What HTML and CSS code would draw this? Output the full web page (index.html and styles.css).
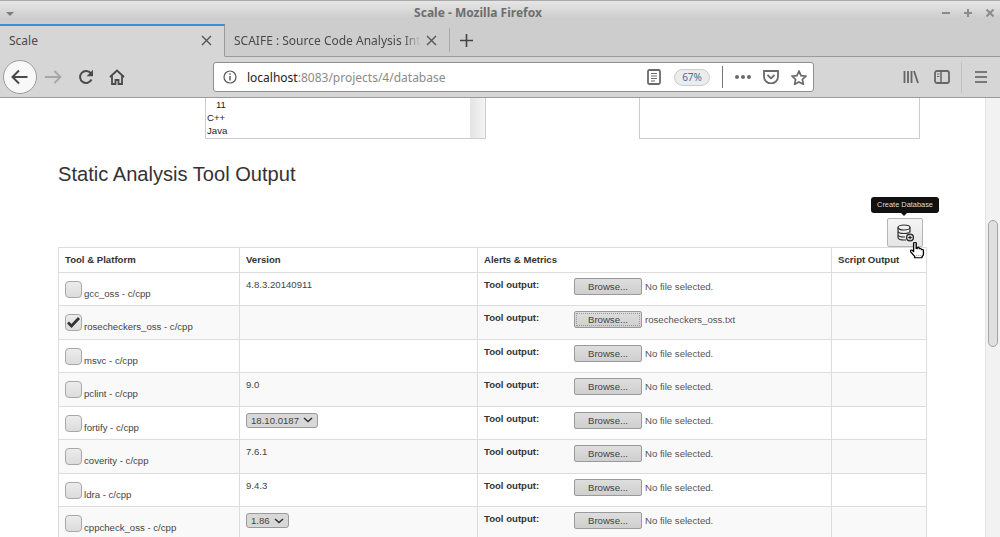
FILE: index.html
```html
<!DOCTYPE html>
<html>
	<head>
		<meta charset="UTF-8">
		<title>Scale</title>
		<link rel="stylesheet" href="styles.css">
	</head>
	<body>
		<div class="titlebar">
			<span class="menu-arrow"></span>
			<span class="title">Scale - Mozilla Firefox</span>
			<div class="win-btns">
				<svg width="8" height="8" viewBox="0 0 8 8"><path d="M0 4h8" stroke="#8a8a8a" stroke-width="2"/></svg>
				<svg width="8" height="8" viewBox="0 0 8 8"><path d="M0 4h8M4 0v8" stroke="#8a8a8a" stroke-width="2"/></svg>
				<svg width="8" height="8" viewBox="0 0 8 8"><path d="M.5.5l7 7M7.500.5l-7 7" stroke="#8a8a8a" stroke-width="2"/></svg>
			</div>
		</div>
		<div class="tabbar">
			<div class="tab active">
				<span class="tab-label">Scale</span>
				<svg width="11" height="11" viewBox="0 0 11 11"><path d="M1 1l9 9M10 1l-9 9" stroke="#555" stroke-width="1.4"/></svg>
			</div>
			<div class="tab second">
				<span class="tab-label fade">SCAIFE : Source Code Analysis Int</span>
				<svg width="11" height="11" viewBox="0 0 11 11"><path d="M1 1l9 9M10 1l-9 9" stroke="#555" stroke-width="1.4"/></svg>
			</div>
			<div class="tab-sep"></div>
			<svg class="new-tab" width="15" height="15" viewBox="0 0 15 15"><path d="M7.500 1v13M1 7.500h13" stroke="#444" stroke-width="1.600"/></svg>
		</div>
		<div class="toolbar">
			<div class="back">
				<svg width="18" height="16" viewBox="0 0 18 16"><path d="M1.500 8h15M8 1.500L1.500 8 8 14.500" fill="none" stroke="#4a4a4a" stroke-width="2"/></svg>
			</div>
			<svg class="forward" width="17" height="14" viewBox="0 0 17 14"><path d="M0 7h15M9.500 1l6 6-6 6" fill="none" stroke="#a6a6a6" stroke-width="1.800"/></svg>
			<svg class="reload" width="16" height="16" viewBox="0 0 16 16"><path d="M13.500 10.500A6 6 0 1 1 12.800 4.200" fill="none" stroke="#4a4a4a" stroke-width="2"/><path d="M15 0.800v6.400H8.600z" fill="#4a4a4a"/></svg>
			<svg class="home" width="16" height="16" viewBox="0 0 16 16"><path d="M1 8l7-6.500L15 8M3 7v8h3.500v-4h3v4H13V7" fill="none" stroke="#4a4a4a" stroke-width="1.800"/></svg>
			<div class="urlbar">
				<svg class="info" width="14" height="14" viewBox="0 0 14 14"><circle cx="7" cy="7" r="6" fill="none" stroke="#555" stroke-width="1.200"/><path d="M7 6v4.500M7 3.300v1.400" stroke="#555" stroke-width="1.400"/></svg>
				<span class="url"><b>localhost</b>:8083/projects/4/database</span>
				<svg class="reader" width="14" height="16" viewBox="0 0 14 16"><rect x="1" y="1" width="12" height="14" rx="1.500" fill="none" stroke="#6a6a6a" stroke-width="1.800"/><path d="M4 4.500h6M4 7h6M4 9.500h6M4 12h4" stroke="#6a6a6a"/></svg>
				<span class="zoom">67%</span>
				<span class="url-sep"></span>
				<span class="dots"><i></i><i></i><i></i></span>
				<svg class="pocket" width="16" height="14" viewBox="0 0 16 14"><path d="M1 1h14v5.500a7 7 0 0 1-14 0z" fill="none" stroke="#6a6a6a" stroke-width="1.800"/><path d="M4.500 5L8 8.300 11.500 5" fill="none" stroke="#6a6a6a" stroke-width="1.800"/></svg>
				<svg class="star" width="16" height="15" viewBox="0 0 16 15"><path d="M8 1.200l2.100 4.400 4.800.6-3.500 3.300.9 4.700L8 11.900l-4.300 2.300.9-4.700L1.100 6.200l4.800-.6z" fill="none" stroke="#6a6a6a" stroke-width="1.700"/></svg>
			</div>
			<svg class="library" width="16" height="14" viewBox="0 0 16 14"><path d="M1.500 1v12M5 1v12M8.500 1v12M11 1l4 12" stroke="#666" stroke-width="1.800" fill="none"/></svg>
			<svg class="sidebar" width="16" height="14" viewBox="0 0 16 14"><rect x="1" y="1" width="14" height="12" rx="2" fill="none" stroke="#666" stroke-width="1.800"/><path d="M7 1v12" stroke="#666" stroke-width="1.500"/><path d="M3 4h2.500M3 6.500h2.500" stroke="#666"/></svg>
			<div class="tool-sep"></div>
			<svg class="hamburger" width="12" height="12" viewBox="0 0 12 12"><path d="M0 1h12M0 6h12M0 11h12" stroke="#5a5a5a" stroke-width="1.600"/></svg>
		</div>
		<div class="viewport">
			<div class="page">
				<div class="pickers">
					<div class="picker">
						<div class="picker-list">
							<div class="indent">11</div>
							<div>C++</div>
							<div>Java</div>
						</div>
						<div class="picker-scroll"></div>
					</div>
					<div class="picker"></div>
				</div>
				<h2>Static Analysis Tool Output</h2>
				<div class="actions">
					<button class="db-btn">
						<svg width="17" height="18" viewBox="0 0 17 18">
							<ellipse cx="7" cy="3.500" rx="6" ry="2.500" fill="none" stroke="#333" stroke-width="1.200"/>
							<path d="M1 3.500v10c0 1.400 2.700 2.500 6 2.500h2M13 3.500v5M1 7c0 1.400 2.700 2.500 6 2.500s6-1.100 6-2.500M1 10.500c0 1.400 2.700 2.500 6 2.500h1" fill="none" stroke="#333" stroke-width="1.200"/>
							<circle cx="13" cy="13.500" r="3.400" fill="#ddd" stroke="#222" stroke-width="1.300"/>
							<path d="M13 11.800v3.400M11.300 13.500h3.400" stroke="#222" stroke-width="1.200"/>
						</svg>
					</button>
					<div class="tooltip">Create Database</div>
					<svg class="cursor" width="16" height="17" viewBox="1 1 15.500 19.500" preserveAspectRatio="none"><path d="M5 1.500c1-.8 2 0 2 1v6l1 .1V7.500c.8-.8 1.800-.5 2 .5v.8c.8-.7 1.800-.4 2 .5v.6c.8-.6 2-.2 2 .9v4.200c0 1.500-.8 2.200-1.500 3v1H5.500v-1.500L1.500 12c-.8-1.300.5-2.300 1.700-1.500L4.500 12V2.500z" fill="#fff" stroke="#000" stroke-width="1.300" stroke-linejoin="round"/><path d="M7 16.500h6" stroke="#999" stroke-dasharray="1 1"/></svg>
				</div>
				<table>
					<tr class="head">
						<th class="c1">Tool &amp; Platform</th>
						<th class="c2">Version</th>
						<th class="c3">Alerts &amp; Metrics</th>
						<th class="c4">Script Output</th>
					</tr>
					<tr>
						<td><label><span class="check"></span><span class="name">gcc_oss - c/cpp</span></label></td>
						<td class="ver">4.8.3.20140911</td>
						<td><div class="output"><b>Tool output:</b><span class="browse">Browse...</span><span class="file">No file selected.</span></div></td>
						<td></td>
					</tr>
					<tr class="odd">
						<td><label><span class="check checked"><svg width="15" height="15" viewBox="0 0 15 15"><path d="M2 7.500l3.500 3.500 7.500-8" fill="none" stroke="#333" stroke-width="2.800"/></svg></span><span class="name">rosecheckers_oss - c/cpp</span></label></td>
						<td class="ver"></td>
						<td><div class="output"><b>Tool output:</b><span class="browse focus"><span>Browse...</span></span><span class="file">rosecheckers_oss.txt</span></div></td>
						<td></td>
					</tr>
					<tr>
						<td><label><span class="check"></span><span class="name">msvc - c/cpp</span></label></td>
						<td class="ver"></td>
						<td><div class="output"><b>Tool output:</b><span class="browse">Browse...</span><span class="file">No file selected.</span></div></td>
						<td></td>
					</tr>
					<tr class="odd">
						<td><label><span class="check"></span><span class="name">pclint - c/cpp</span></label></td>
						<td class="ver">9.0</td>
						<td><div class="output"><b>Tool output:</b><span class="browse">Browse...</span><span class="file">No file selected.</span></div></td>
						<td></td>
					</tr>
					<tr>
						<td><label><span class="check"></span><span class="name">fortify - c/cpp</span></label></td>
						<td><span class="select">18.10.0187<svg width="10" height="6" viewBox="0 0 10 6"><path d="M1 1l4 3.500L9 1" fill="none" stroke="#333" stroke-width="1.600"/></svg></span></td>
						<td><div class="output"><b>Tool output:</b><span class="browse">Browse...</span><span class="file">No file selected.</span></div></td>
						<td></td>
					</tr>
					<tr class="odd">
						<td><label><span class="check"></span><span class="name">coverity - c/cpp</span></label></td>
						<td class="ver">7.6.1</td>
						<td><div class="output"><b>Tool output:</b><span class="browse">Browse...</span><span class="file">No file selected.</span></div></td>
						<td></td>
					</tr>
					<tr>
						<td><label><span class="check"></span><span class="name">ldra - c/cpp</span></label></td>
						<td class="ver">9.4.3</td>
						<td><div class="output"><b>Tool output:</b><span class="browse">Browse...</span><span class="file">No file selected.</span></div></td>
						<td></td>
					</tr>
					<tr class="odd">
						<td><label><span class="check"></span><span class="name">cppcheck_oss - c/cpp</span></label></td>
						<td><span class="select">1.86<svg width="10" height="6" viewBox="0 0 10 6"><path d="M1 1l4 3.500L9 1" fill="none" stroke="#333" stroke-width="1.600"/></svg></span></td>
						<td><div class="output"><b>Tool output:</b><span class="browse">Browse...</span><span class="file">No file selected.</span></div></td>
						<td></td>
					</tr>
				</table>
			</div>
			<div class="scrollbar"><div class="thumb"></div></div>
		</div>
	</body>
</html>
```

FILE: styles.css
```css
*{
	margin: 0;
	padding: 0;
	box-sizing: border-box;
}
html,body{
	height: 537px;
	overflow: hidden;
}
body{
	font-family: "Liberation Sans", sans-serif;
	font-size: 9.6px;
	color: #333;
	background: #fff;
}

/* window title */
.titlebar{
	height: 24px;
	border-top: 1px solid #a8a8a8;
	background: linear-gradient(#e6e6e6, #cdcdcd 75%, #cdcdcd);
	display: flex;
	align-items: center;
	justify-content: center;
	padding-right: 44px;
	position: relative;
}
.menu-arrow{
	position: absolute;
	left: 6px;
	top: 11px;
	border-style: solid;
	border-width: 4px 4px 0;
	border-color: #7c7c7c transparent transparent;
}
.title{
	font-family: "Noto Sans", sans-serif;
	font-size: 12px;
	font-weight: bold;
	color: #6e6e6e;
}
.win-btns{
	position: absolute;
	right: 6px;
	top: 8px;
	display: flex;
	gap: 14px;
}

/* tabs */
.tabbar{
	height: 33px;
	background: #cdcdcd;
	border-bottom: 1px solid #9a9a9a;
	display: flex;
	align-items: center;
	font-family: "Noto Sans", sans-serif;
	font-size: 12px;
	color: #4a4a4a;
}
.tab{
	height: 33px;
	display: flex;
	align-items: center;
	justify-content: space-between;
}
.tab.active{
	width: 225px;
	padding: 0 12px 0 9px;
	background: #d6d6d6;
	border-top: 2px solid #3d8fdc;
	border-right: 1px solid #9a9a9a;
	border-bottom: 1px solid #d6d6d6;
}
.tab.second{
	width: 224px;
	padding: 0 12px 0 9px;
}
.tab-label.fade{
	width: 187px;
	white-space: nowrap;
	overflow: hidden;
	-webkit-mask-image: linear-gradient(to right, #000 170px, transparent 187px);
}
.tab-sep{
	width: 1px;
	height: 24px;
	background: #a8a8a8;
}
.new-tab{
	margin-left: 9px;
}

/* navigation */
.toolbar{
	height: 41px;
	background: #d6d6d6;
	border-bottom: 1px solid #9a9a9a;
	display: flex;
	align-items: center;
}
.back{
	width: 34px;
	height: 34px;
	margin-left: 3px;
	border: 1px solid #9c9c9c;
	border-radius: 50%;
	background: #f8f8f8;
	display: flex;
	align-items: center;
	justify-content: center;
}
.forward{
	margin-left: 8px;
}
.reload{
	margin-left: 16px;
}
.home{
	margin-left: 15px;
}
.urlbar{
	width: 601px;
	height: 30px;
	margin-left: 88px;
	background: #fff;
	border: 1px solid #8f8f8f;
	border-radius: 3px;
	display: flex;
	align-items: center;
	font-family: "Noto Sans", sans-serif;
	font-size: 12px;
}
.info{
	margin-left: 9px;
}
.url{
	margin-left: 10px;
	width: 400px;
	color: #8a8a8a;
	white-space: nowrap;
}
.url b{
	font-weight: normal;
	color: #222;
}
.zoom{
	width: 36px;
	height: 17px;
	margin-left: 13px;
	border: 1px solid #ccc;
	border-radius: 9px;
	background: #ececec;
	color: #3c6f9e;
	font-size: 10px;
	line-height: 15px;
	text-align: center;
}
.url-sep{
	width: 1px;
	height: 22px;
	margin-left: 12px;
	background: #777;
}
.dots{
	display: flex;
	gap: 2px;
	margin-left: 12px;
}
.dots i{
	width: 4px;
	height: 4px;
	border-radius: 50%;
	background: #6a6a6a;
}
.pocket{
	margin-left: 12px;
}
.star{
	margin-left: 12px;
}
.library{
	margin-left: 89px;
}
.sidebar{
	margin-left: 15px;
}
.tool-sep{
	width: 1px;
	height: 31px;
	margin-left: 11px;
	background: #c0c0c0;
}
.hamburger{
	margin-left: 13px;
}

/* page */
.viewport{
	height: 439px;
	display: flex;
	overflow: hidden;
}
.page{
	width: 985px;
	flex: none;
}
.pickers{
	height: 41px;
	display: flex;
	gap: 153px;
	padding-left: 205px;
}
.picker{
	width: 281px;
	height: 41px;
	border: 1px solid #ccc;
	border-top: 0;
	display: flex;
	justify-content: space-between;
	color: #222;
}
.picker-list{
	padding: 0 1px;
	line-height: 13px;
}
.indent{
	padding-left: 9px;
}
.picker-scroll{
	width: 15px;
	background: linear-gradient(to right, #e4e4e4, #f4f4f4);
}
h2{
	margin: 24px 0 0 58px;
	font-size: 20.100px;
	font-weight: normal;
	line-height: 22px;
	color: #333;
}
.actions{
	height: 62px;
	position: relative;
	display: flex;
	justify-content: flex-end;
	align-items: flex-end;
	padding-right: 62px;
}
.db-btn{
	width: 36px;
	height: 29px;
	border: 1px solid #b5b5b5;
	border-radius: 2px;
	background: linear-gradient(#f4f4f4, #e6e6e6);
	display: flex;
	align-items: center;
	justify-content: center;
}
.tooltip{
	position: absolute;
	left: 871px;
	top: 12px;
	width: 68px;
	height: 16px;
	border-radius: 3px;
	background: #111;
	color: #ddd;
	font-size: 7.400px;
	line-height: 16px;
	text-align: center;
}
.tooltip::after{
	content: "";
	position: absolute;
	left: 30px;
	top: 16px;
	border-style: solid;
	border-width: 3px 3px 0;
	border-color: #111 transparent transparent;
}
.cursor{
	position: absolute;
	left: 910px;
	top: 57px;
}
table{
	width: 869px;
	margin-left: 58px;
	border-collapse: collapse;
	table-layout: fixed;
}
th,td{
	border: 1px solid #ddd;
	text-align: left;
	vertical-align: top;
	padding: 6px 6px 4px;
	line-height: 13px;
	color: #444;
}
th{
	font-weight: bold;
	padding: 5px 6px;
	color: #333;
}
tr{
	height: 33.45px;
}
tr.head{
	height: 25px;
}
tr.odd td{
	background: #f9f9f9;
}
td.ver{
	padding-top: 5px;
}
.c1{
	width: 181px;
}
.c2{
	width: 238px;
}
.c3{
	width: 354px;
}
label{
	display: flex;
	align-items: flex-start;
	gap: 2px;
	margin-top: 2px;
}
.name{
	margin-top: 7px;
	line-height: 11px;
}
.check{
	width: 17px;
	height: 17px;
	flex: none;
	border: 1px solid #a8a8a8;
	border-radius: 4px;
	background: linear-gradient(#ececec, #dcdcdc);
	display: flex;
	align-items: center;
	justify-content: center;
}
.output{
	display: flex;
	align-items: flex-start;
	color: #555;
}
.output b{
	width: 90px;
	margin-top: -1px;
	color: #333;
}
.browse{
	width: 68px;
	height: 17px;
	border: 1px solid #9a9a9a;
	border-radius: 2px;
	background: linear-gradient(#dedede, #cfcfcf);
	text-align: center;
	line-height: 15px;
	color: #444;
	margin-top: -1px;
}
.browse.focus{
	padding: 1px;
}
.browse.focus span{
	display: block;
	height: 13px;
	line-height: 12px;
	border: 1px dotted #999;
}
.file{
	margin-left: 3px;
	margin-top: 1px;
}
.select{
	display: inline-flex;
	align-items: center;
	gap: 4px;
	height: 15px;
	padding: 0 4px;
	border: 1px solid #9a9a9a;
	border-radius: 3px;
	background: #d8d8d8;
	color: #444;
}

/* page scrollbar */
.scrollbar{
	width: 15px;
	flex: none;
	background: #f2f2f2;
	border-left: 1px solid #e4e4e4;
	padding: 122px 0 0 2px;
}
.thumb{
	width: 10px;
	height: 127px;
	border: 1px solid #a4a4a4;
	border-radius: 5px;
	background: #e0e0e0;
}
```
